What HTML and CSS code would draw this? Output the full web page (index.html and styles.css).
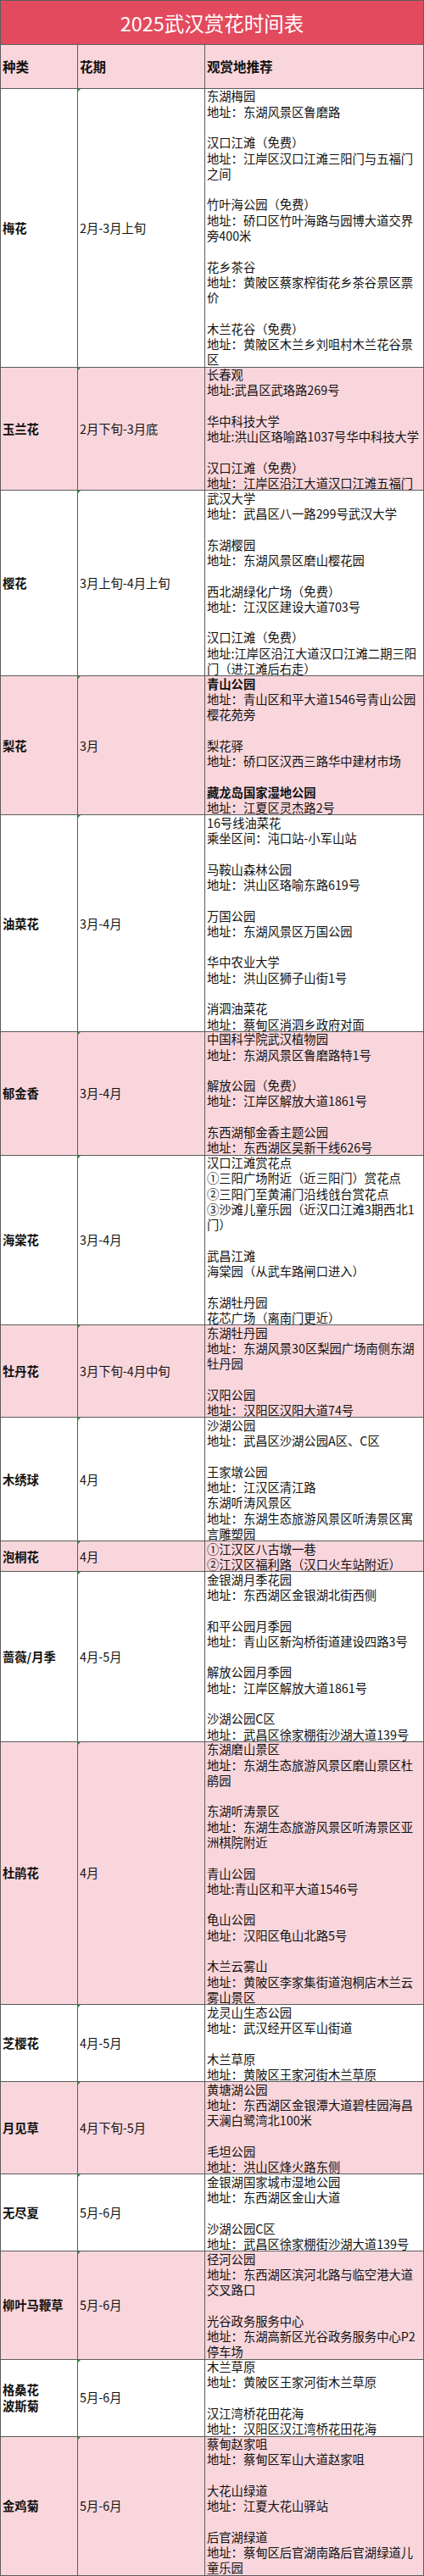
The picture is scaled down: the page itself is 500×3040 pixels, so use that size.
FILE: index.html
```html
<!DOCTYPE html>
<html lang="zh-CN">
<head>
<meta charset="utf-8">
<title>2025武汉赏花时间表</title>
<link rel="stylesheet" href="styles.css">
</head>
<body>
<table class="sheet">
  <colgroup>
    <col class="c-kind">
    <col class="c-period">
    <col class="c-spots">
  </colgroup>
  <thead>
    <tr><th class="title" colspan="3">2025武汉赏花时间表</th></tr>
    <tr class="head">
      <th>种类</th>
      <th>花期</th>
      <th>观赏地推荐</th>
    </tr>
  </thead>
  <tbody>
    <tr>
      <td class="kind">梅花</td>
      <td class="period">2月-3月上旬</td>
      <td class="spots">
        <div class="spot">东湖梅园<br>地址：东湖风景区鲁磨路</div>
        <div class="spot">汉口江滩（免费）<br>地址：江岸区汉口江滩三阳门与五福门之间</div>
        <div class="spot">竹叶海公园（免费）<br>地址：硚口区竹叶海路与园博大道交界旁400米</div>
        <div class="spot">花乡茶谷<br>地址：黄陂区蔡家榨街花乡茶谷景区票价</div>
        <div class="spot">木兰花谷（免费）<br>地址：黄陂区木兰乡刘咀村木兰花谷景区</div>
      </td>
    </tr>
    <tr class="alt">
      <td class="kind">玉兰花</td>
      <td class="period">2月下旬-3月底</td>
      <td class="spots">
        <div class="spot">长春观<br>地址:武昌区武珞路269号</div>
        <div class="spot">华中科技大学<br>地址:洪山区珞喻路1037号华中科技大学</div>
        <div class="spot">汉口江滩（免费）<br>地址：江岸区沿江大道汉口江滩五福门</div>
      </td>
    </tr>
    <tr>
      <td class="kind">樱花</td>
      <td class="period">3月上旬-4月上旬</td>
      <td class="spots">
        <div class="spot">武汉大学<br>地址：武昌区八一路299号武汉大学</div>
        <div class="spot">东湖樱园<br>地址：东湖风景区磨山樱花园</div>
        <div class="spot">西北湖绿化广场（免费）<br>地址：江汉区建设大道703号</div>
        <div class="spot">汉口江滩（免费）<br>地址:江岸区沿江大道汉口江滩二期三阳门（进江滩后右走）</div>
      </td>
    </tr>
    <tr class="alt">
      <td class="kind">梨花</td>
      <td class="period">3月</td>
      <td class="spots">
        <div class="spot"><b>青山公园</b><br>地址：青山区和平大道1546号青山公园樱花苑旁</div>
        <div class="spot">梨花驿<br>地址：硚口区汉西三路华中建材市场</div>
        <div class="spot"><b>藏龙岛国家湿地公园</b><br>地址：江夏区灵杰路2号</div>
      </td>
    </tr>
    <tr>
      <td class="kind">油菜花</td>
      <td class="period">3月-4月</td>
      <td class="spots">
        <div class="spot">16号线油菜花<br>乘坐区间：沌口站-小军山站</div>
        <div class="spot">马鞍山森林公园<br>地址：洪山区珞喻东路619号</div>
        <div class="spot">万国公园<br>地址：东湖风景区万国公园</div>
        <div class="spot">华中农业大学<br>地址：洪山区狮子山街1号</div>
        <div class="spot">消泗油菜花<br>地址：蔡甸区消泗乡政府对面</div>
      </td>
    </tr>
    <tr class="alt">
      <td class="kind">郁金香</td>
      <td class="period">3月-4月</td>
      <td class="spots">
        <div class="spot">中国科学院武汉植物园<br>地址：东湖风景区鲁磨路特1号</div>
        <div class="spot">解放公园（免费）<br>地址：江岸区解放大道1861号</div>
        <div class="spot">东西湖郁金香主题公园<br>地址：东西湖区吴新干线626号</div>
      </td>
    </tr>
    <tr>
      <td class="kind">海棠花</td>
      <td class="period">3月-4月</td>
      <td class="spots">
        <div class="spot">汉口江滩赏花点<br>①三阳广场附近（近三阳门）赏花点<br>②三阳门至黄浦门沿线戗台赏花点<br>③沙滩儿童乐园（近汉口江滩3期西北1门）</div>
        <div class="spot">武昌江滩<br>海棠园（从武车路闸口进入）</div>
        <div class="spot">东湖牡丹园<br>花芯广场（离南门更近）</div>
      </td>
    </tr>
    <tr class="alt">
      <td class="kind">牡丹花</td>
      <td class="period">3月下旬-4月中旬</td>
      <td class="spots">
        <div class="spot">东湖牡丹园<br>地址：东湖风景30区梨园广场南侧东湖牡丹园</div>
        <div class="spot">汉阳公园<br>地址：汉阳区汉阳大道74号</div>
      </td>
    </tr>
    <tr>
      <td class="kind">木绣球</td>
      <td class="period">4月</td>
      <td class="spots">
        <div class="spot">沙湖公园<br>地址：武昌区沙湖公园A区、C区</div>
        <div class="spot">王家墩公园<br>地址：江汉区清江路<br>东湖听涛风景区<br>地址：东湖生态旅游风景区听涛景区寓言雕塑园</div>
      </td>
    </tr>
    <tr class="alt">
      <td class="kind">泡桐花</td>
      <td class="period">4月</td>
      <td class="spots">
        <div class="spot">①江汉区八古墩一巷<br>②江汉区福利路（汉口火车站附近）</div>
      </td>
    </tr>
    <tr>
      <td class="kind">蔷薇/月季</td>
      <td class="period">4月-5月</td>
      <td class="spots">
        <div class="spot">金银湖月季花园<br>地址：东西湖区金银湖北街西侧</div>
        <div class="spot">和平公园月季园<br>地址：青山区新沟桥街道建设四路3号</div>
        <div class="spot">解放公园月季园<br>地址：江岸区解放大道1861号</div>
        <div class="spot">沙湖公园C区<br>地址：武昌区徐家棚街沙湖大道139号</div>
      </td>
    </tr>
    <tr class="alt">
      <td class="kind">杜鹃花</td>
      <td class="period">4月</td>
      <td class="spots">
        <div class="spot">东湖磨山景区<br>地址：东湖生态旅游风景区磨山景区杜鹃园</div>
        <div class="spot">东湖听涛景区<br>地址：东湖生态旅游风景区听涛景区亚洲棋院附近</div>
        <div class="spot">青山公园<br>地址:青山区和平大道1546号</div>
        <div class="spot">龟山公园<br>地址：汉阳区龟山北路5号</div>
        <div class="spot">木兰云雾山<br>地址：黄陂区李家集街道泡桐店木兰云雾山景区</div>
      </td>
    </tr>
    <tr>
      <td class="kind">芝樱花</td>
      <td class="period">4月-5月</td>
      <td class="spots">
        <div class="spot">龙灵山生态公园<br>地址：武汉经开区军山街道</div>
        <div class="spot">木兰草原<br>地址：黄陂区王家河街木兰草原</div>
      </td>
    </tr>
    <tr class="alt">
      <td class="kind">月见草</td>
      <td class="period">4月下旬-5月</td>
      <td class="spots">
        <div class="spot">黄塘湖公园<br>地址：东西湖区金银潭大道碧桂园海昌天澜白鹭湾北100米</div>
        <div class="spot">毛坦公园<br>地址：洪山区烽火路东侧</div>
      </td>
    </tr>
    <tr>
      <td class="kind">无尽夏</td>
      <td class="period">5月-6月</td>
      <td class="spots">
        <div class="spot">金银湖国家城市湿地公园<br>地址：东西湖区金山大道</div>
        <div class="spot">沙湖公园C区<br>地址：武昌区徐家棚街沙湖大道139号</div>
      </td>
    </tr>
    <tr class="alt">
      <td class="kind">柳叶马鞭草</td>
      <td class="period">5月-6月</td>
      <td class="spots">
        <div class="spot">径河公园<br>地址：东西湖区滨河北路与临空港大道交叉路口</div>
        <div class="spot">光谷政务服务中心<br>地址：东湖高新区光谷政务服务中心P2停车场</div>
      </td>
    </tr>
    <tr>
      <td class="kind">格桑花<br>波斯菊</td>
      <td class="period">5月-6月</td>
      <td class="spots">
        <div class="spot">木兰草原<br>地址：黄陂区王家河街木兰草原</div>
        <div class="spot">汉江湾桥花田花海<br>地址：汉阳区汉江湾桥花田花海</div>
      </td>
    </tr>
    <tr class="alt">
      <td class="kind">金鸡菊</td>
      <td class="period">5月-6月</td>
      <td class="spots">
        <div class="spot">蔡甸赵家咀<br>地址：蔡甸区军山大道赵家咀</div>
        <div class="spot">大花山绿道<br>地址：江夏大花山驿站</div>
        <div class="spot">后官湖绿道<br>地址：蔡甸区后官湖南路后官湖绿道儿童乐园</div>
      </td>
    </tr>
  </tbody>
</table>
</body>
</html>
```

FILE: styles.css
```css
html, body {
  margin: 0;
  padding: 0;
  background: #ffffff;
}

body {
  font-family: "Noto Sans CJK SC", "Noto Sans", sans-serif;
  color: #111111;
}

.sheet {
  border-collapse: collapse;
  table-layout: fixed;
  width: 499px;
  font-size: 14.3px;
  line-height: 18.29px;
}

.c-kind { width: 91px; }
.c-period { width: 150px; }
.c-spots { width: 258px; }

.sheet th,
.sheet td {
  border: 1px solid #5c5c5c;
  padding: 0 2px;
  text-align: left;
  vertical-align: middle;
  word-break: break-all;
}

.sheet th.title {
  height: 51px;
  padding: 0;
  background: #e34a5d;
  color: #ffffff;
  font-size: 23.5px;
  font-weight: 400;
  text-align: center;
  line-height: 30px;
}

.head th {
  height: 51px;
  background: #f9d6dc;
  font-size: 15.5px;
  font-weight: 700;
  color: #111111;
}

.alt td {
  background: #f9d6dc;
}

td.kind {
  font-weight: 700;
}

td.period {
  position: relative;
}

td.period::before {
  content: "";
  position: absolute;
  left: 0;
  top: 0;
  border-top: 3px solid #2e8b3a;
  border-right: 3px solid transparent;
}

.spot + .spot {
  margin-top: 18.29px;
}

.spot:first-child {
  margin-top: -0.6px;
}

.spot:last-child {
  margin-bottom: -1px;
}

.spot b {
  font-weight: 700;
}
```
